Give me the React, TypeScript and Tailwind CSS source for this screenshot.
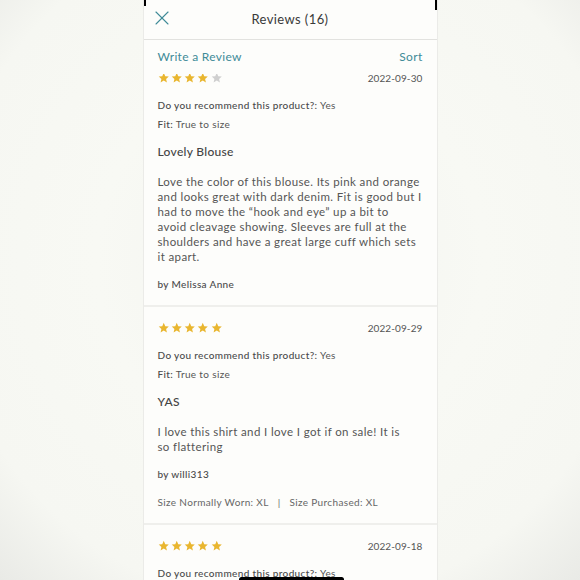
import { X } from "lucide-react";

type Review = {
  rating: number;
  date: string;
  fit: string;
  title: string;
  body: string[];
  author: string;
  sizes?: { worn: string; purchased: string };
};

const reviews: Review[] = [
  {
    rating: 4,
    date: "2022-09-30",
    fit: "True to size",
    title: "Lovely Blouse",
    body: [
      "Love the color of this blouse. Its pink and orange",
      "and looks great with dark denim. Fit is good but I",
      "had to move the \u201chook and eye\u201d up a bit to",
      "avoid cleavage showing. Sleeves are full at the",
      "shoulders and have a great large cuff which sets",
      "it apart.",
    ],
    author: "Melissa Anne",
  },
  {
    rating: 5,
    date: "2022-09-29",
    fit: "True to size",
    title: "YAS",
    body: ["I love this shirt and I love I got if on sale! It is", "so flattering"],
    author: "willi313",
    sizes: { worn: "XL", purchased: "XL" },
  },
  {
    rating: 5,
    date: "2022-09-18",
    fit: "True to size",
    title: "Great top",
    body: [],
    author: "",
  },
];

function Star({ filled }: { filled: boolean }) {
  return (
    <svg
      viewBox="0 0 24 24"
      className={`h-[11.5px] w-[11.5px] ${filled ? "fill-[#e9b62f]" : "fill-[#cfcfcf]"}`}
    >
      <path d="M12 1.8l3.1 6.9 7.4.7-5.6 5 1.7 7.4L12 17.9l-6.6 3.9 1.7-7.4-5.6-5 7.4-.7z" />
    </svg>
  );
}

function ReviewCard({ review }: { review: Review }) {
  return (
    <article className="border-b-2 border-[#efefec] px-[14px] pb-[13px] pt-[14px]">
      <div className="flex h-[14px] items-center justify-between">
        <div className="flex gap-[1.8px]">
          {[1, 2, 3, 4, 5].map((n) => (
            <Star key={n} filled={n <= review.rating} />
          ))}
        </div>
        <span className="text-[10px] tracking-[0.1px] text-[#555]">
          {review.date}
        </span>
      </div>

      <p className="mt-[12px] text-[10px] leading-[16px] tracking-[0.35px] text-[#555]">
        <span className="font-medium text-[#4a4a4a]">
          Do you recommend this product?:
        </span>{" "}
        Yes
      </p>
      <p className="mt-[3px] text-[10px] leading-[16px] tracking-[0.35px] text-[#555]">
        <span className="font-medium text-[#4a4a4a]">Fit:</span> {review.fit}
      </p>

      <h3 className="mt-[11px] text-[12px] font-medium leading-[18px] tracking-[0.3px] text-[#444]">
        {review.title}
      </h3>

      <div className="mt-[13px] text-[11.5px] leading-[15px] tracking-[0.38px] text-[#555]">
        {review.body.map((line) => (
          <p key={line} className="whitespace-nowrap">
            {line}
          </p>
        ))}
      </div>

      <p className="mt-[12px] text-[10px] font-medium leading-[16px] tracking-[0.35px] text-[#4a4a4a]">
        by {review.author}
      </p>

      {review.sizes && (
        <p className="mt-[12px] text-[10px] leading-[16px] tracking-[0.35px] text-[#666]">
          Size Normally Worn: {review.sizes.worn}
          <span className="px-[9px]">|</span>
          Size Purchased: {review.sizes.purchased}
        </p>
      )}
    </article>
  );
}

export default function App() {
  return (
    <div className="flex h-[580px] w-[580px] justify-center bg-[radial-gradient(circle_at_50%_45%,#f3f4f0_0%,#f8f9f4_45%,#f6f7f2_80%,#e9eae6_100%)] font-['Lato','Noto_Sans',sans-serif]">
      <div className="relative flex h-[580px] w-[295px] flex-col overflow-hidden border-x border-[#ebebe8] bg-[#fdfdfb]">
        <div className="absolute left-0 top-0 h-[6px] w-[2px] bg-black" />
        <div className="absolute right-0 top-0 h-[10px] w-[2px] bg-black" />

        <header className="relative flex h-[40px] shrink-0 items-center justify-center border-b border-[#e2e2df]">
          <X
            size={24}
            strokeWidth={1.1}
            className="absolute left-[6px] top-[6px] text-[#3f8b98]"
          />
          <h1 className="text-[13px] tracking-[0.4px] text-[#3a3a3a]">
            Reviews (16)
          </h1>
        </header>

        <div className="flex h-[34px] shrink-0 justify-between px-[14px] pt-[9px] text-[12px] leading-[16px] tracking-[0.3px] text-[#3f8b98]">
          <span>Write a Review</span>
          <span>Sort</span>
        </div>

        <div className="min-h-0 flex-1 overflow-hidden">
          <div className="-mt-[17px]">
            {reviews.map((review) => (
              <ReviewCard key={review.date} review={review} />
            ))}
          </div>
        </div>

        <div className="absolute bottom-[-2px] left-[95px] h-[5px] w-[105px] rounded-full bg-black" />
      </div>
    </div>
  );
}
